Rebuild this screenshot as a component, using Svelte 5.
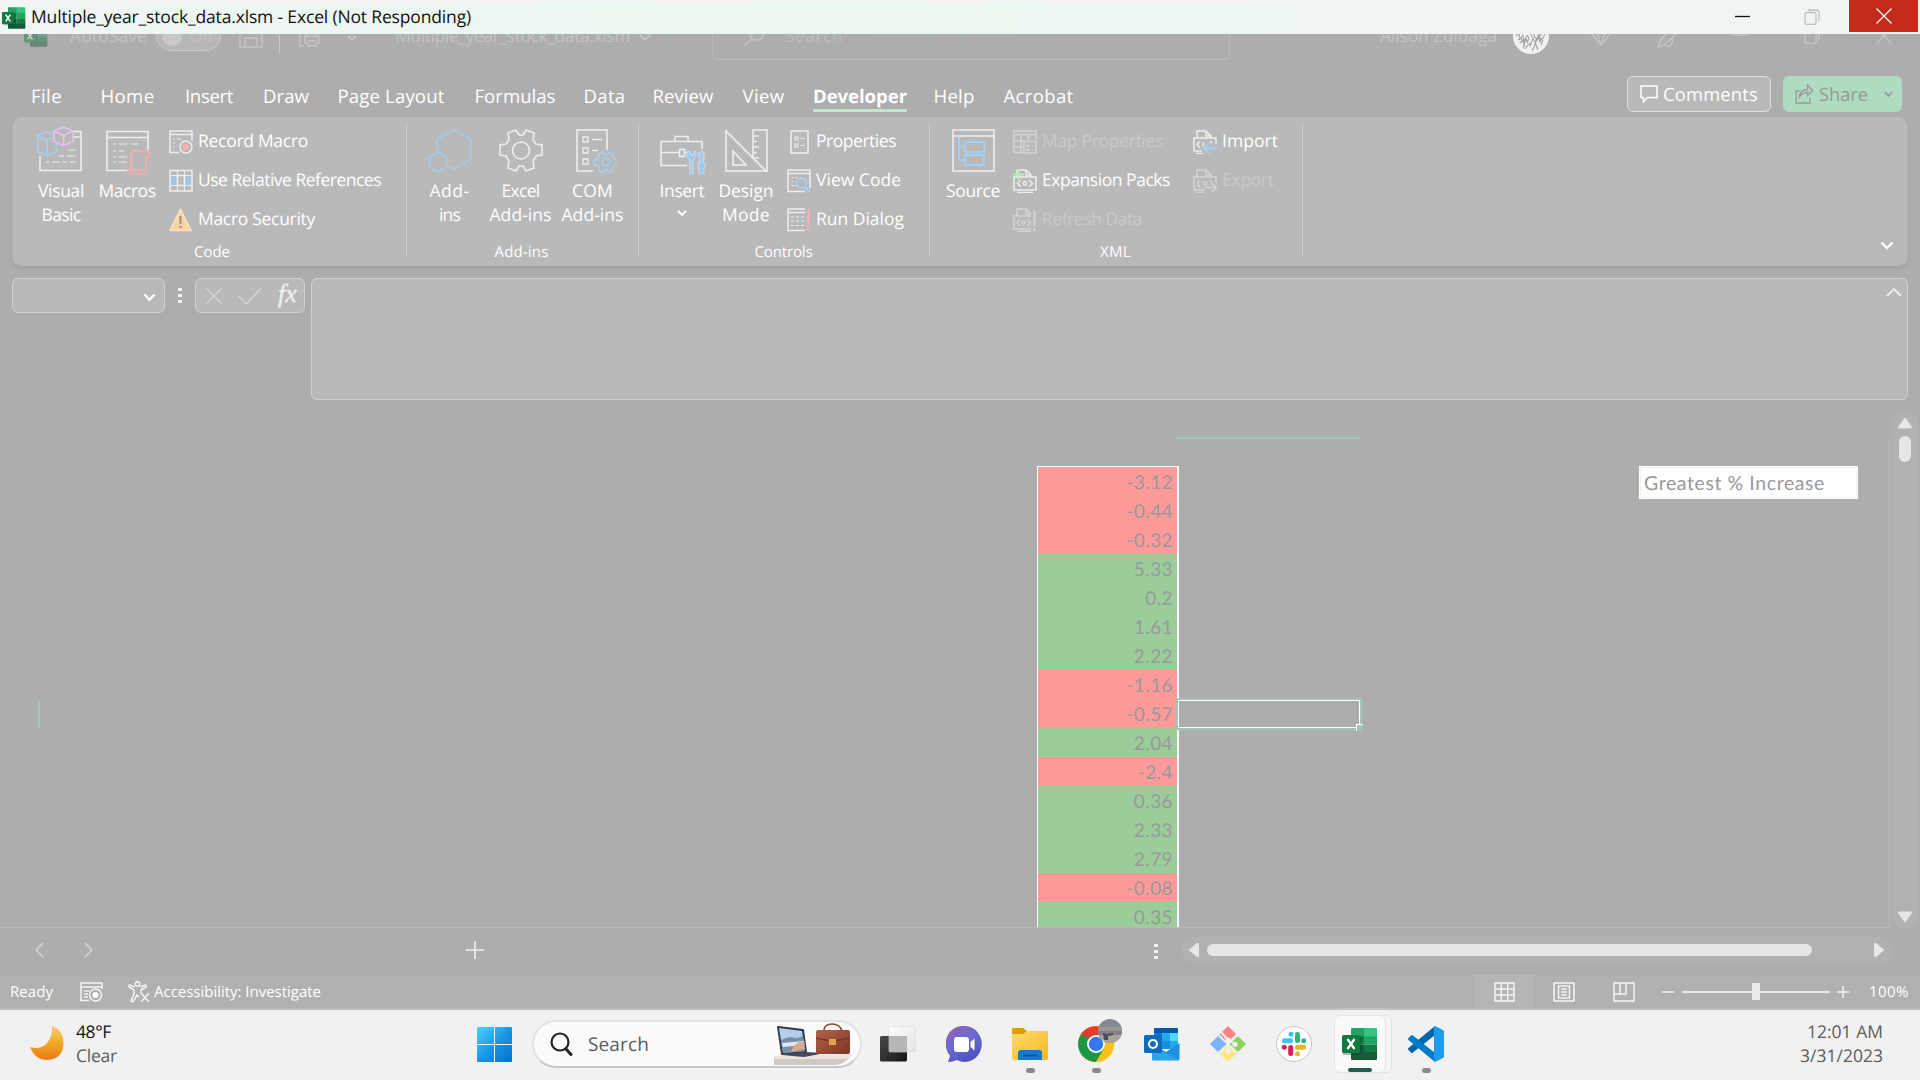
<script>
  // Spreads letter spacing so that a label takes exactly the given width.
  function fit(node, width) {
    if (!width) return;
    const natural = node.getBoundingClientRect().width;
    const count = node.textContent.length;
    node.style.letterSpacing = (width - natural) / count + 'px';
  }

  // name, label width, distance to the next tab
  const tabs = [
    ['File', 31, 69.5], ['Home', 54, 84.5], ['Insert', 48, 78], ['Draw', 46, 74.5], ['Page Layout', 107, 137],
    ['Formulas', 81, 109], ['Data', 42, 69], ['Review', 61, 90], ['View', 42, 70.5], ['Developer', 94, 120.5],
    ['Help', 41, 70], ['Acrobat', 70, 90]
  ];

  const groups = [
    {
      id: 'code', name: 'Code', nameWidth: 36,
      big: [
        { icon: 'visual', lines: [['Visual', 46], ['Basic', 39]] },
        { icon: 'macros', lines: [['Macros', 57]] }
      ],
      cols: [[['record', 'Record Macro', 110], ['relative', 'Use Relative References', 183], ['warning', 'Macro Security', 117]]]
    },
    {
      id: 'addins', name: 'Add-ins', nameWidth: 54,
      big: [
        { icon: 'hex', lines: [['Add-', 40], ['ins', 21]] },
        { icon: 'gear', lines: [['Excel', 38], ['Add-ins', 62]] },
        { icon: 'com', lines: [['COM', 41], ['Add-ins', 62]] }
      ],
      cols: []
    },
    {
      id: 'controls', name: 'Controls', nameWidth: 58,
      big: [
        { icon: 'toolbox', lines: [['Insert', 45]], menu: true },
        { icon: 'design', lines: [['Design', 55], ['Mode', 48]] }
      ],
      cols: [[['props', 'Properties', 80], ['viewcode', 'View Code', 85], ['dialog', 'Run Dialog', 88]]]
    },
    {
      id: 'xml', name: 'XML', nameWidth: 31,
      big: [{ icon: 'source', lines: [['Source', 54]] }],
      cols: [
        [['map', 'Map Properties', 121, true], ['expand', 'Expansion Packs', 128], ['refresh', 'Refresh Data', 100, true]],
        [['import', 'Import', 56], ['export', 'Export', 52, true]]
      ]
    }
  ];

  const changes = ['-3.12', '-0.44', '-0.32', '5.33', '0.2', '1.61', '2.22', '-1.16', '-0.57', '2.04', '-2.4', '0.36', '2.33', '2.79', '-0.08', '0.35'];
</script>

{#snippet excel(size)}
  <svg width={size} height={size} viewBox="0 0 36 36">
    <path d="M10 2h13v9H9V3q0-1 1-1z" fill="#21a366" /><path d="M22 2h12q1 0 1 1v8H22z" fill="#33c481" />
    <path d="M9 10.500h13v8H9z" fill="#107c41" /><path d="M22 10.500h13v8H22z" fill="#21a366" />
    <path d="M9 18.500h13v8H9z" fill="#185c37" /><path d="M22 18.500h13v8H22z" fill="#107c41" />
    <path d="M9 26h26v7q0 1-1 1H10q-1 0-1-1z" fill="#185c37" />
    <rect x="1" y="10" width="19" height="19" rx="1.500" fill="#0b3d24" opacity=".35" />
    <rect y="9" width="18" height="18" rx="1.500" fill="#107c41" />
    <path d="M5.500 13l7 10M12.500 13l-7 10" stroke="#fff" stroke-width="2.300" />
  </svg>
{/snippet}

{#snippet xmlDoc()}
  <path d="M4 8V1h9l5 5v2M13 1v5h5M1 8h22v13H1zM4 23.500h16" />
  <path d="M8 11l-3.500 3.500L8 18M16 11l3.500 3.500L16 18" /><circle cx="12" cy="14.500" r="1.700" />
{/snippet}

{#snippet smallIcon(kind)}
  <svg class="i24" viewBox="0 0 24 24">
    {#if kind === 'record'}
      <path d="M10 22.500H1V1h22v10M1 4.500h22" /><path d="M4 9h2M8 9h4M4 13h2M4 17h2M4 20h1" stroke-width="1.200" />
      <circle cx="17" cy="17" r="6" /><circle cx="17" cy="17" r="3.300" fill="#f7b0b0" stroke="none" />
    {:else if kind === 'relative'}
      <path d="M1.500 7.500h6v8h-6zM16.500 7.500h6v8h-6z" fill="#9dc6e8" stroke="none" />
      <path d="M1 1.500h22v20.500H1zM8.500 6.500h7v10h-7z" /><path d="M1 6.500h22M1 16.500h22M8.500 1.500v20.500M15.500 1.500v20.500" stroke-width="1.200" />
    {:else if kind === 'warning'}
      <path d="M11.500 1.500L22 22.500H1z" fill="#f6d3a0" stroke="#fae4c2" /><path d="M11.500 8v8M11.500 18v2" stroke="#8d8d85" stroke-width="1.800" />
    {:else if kind === 'props'}
      <path d="M4 1h17v22H4z" /><path d="M8 7h3v3H8zM8 14h3v3H8zM13.500 8.500h4M13.500 15.500h4" stroke-width="1.200" />
    {:else if kind === 'viewcode'}
      <path d="M18 22.500H1V1h22v18M1 4.500h22" /><path d="M4.500 8.500h2M8 8.500h2M4.500 12.500h2M4.500 16.500h2M8 16.500h2" stroke-width="1.200" />
      <circle cx="14.500" cy="14" r="5" stroke="#a6d0f1" stroke-width="1.800" /><path d="M18 18l5.500 5.500" stroke="#a6d0f1" stroke-width="2" />
    {:else if kind === 'dialog'}
      <path d="M18 1H1v21.500h17M1 4.500h17" /><path d="M4 9h3M9 9h3M14 9h3M4 13h3M9 13h3M14 13h3M4 17.500h3M9 17.500h3M14 17.500h3" stroke-width="1.200" />
      <path d="M21.500 1.500v17M21.500 20.500v2.500" stroke="#f5b2b4" stroke-width="2.400" />
    {:else if kind === 'map'}
      <path d="M10 22.500H1V1h22v9M1 4.500h22M1 11h10M1 17h9M8 5v17.500M15.500 5v5" /><path d="M11 11.500h12V23H11z" />
      <path d="M14 15h2v1.500h-2zM14 19h2v1.500h-2zM18.500 15.500h2M18.500 19.500h2" stroke-width="1.200" />
    {:else if kind === 'expand'}
      {@render xmlDoc()}<path d="M5.500 0v11M0 5.500h11" stroke="#b8ebc0" stroke-width="2" />
    {:else if kind === 'import'}
      <path d="M4 8V1h9l5 5v2M13 1v5h5M9 21H1V8h22v6M3 23.500h7M7 11l-3 3.500L7 18M17 11l2 2M11 12.500q-2 2 0 4" />
      <path d="M24 18.500H11M16.500 13l-6 5.500 6 5" stroke="#a6d0f1" stroke-width="1.800" />
    {:else if kind === 'export'}
      <path d="M4 8V1h9l5 5v2M13 1v5h5M12 21H1V8h22v6M3 23.500h8M7 11l-3 3.500L7 18M17 11l2 2" /><circle cx="12" cy="14.500" r="1.700" />
      <path d="M12 18.500h11M18.500 14l5 4.500-5 5" />
    {:else if kind === 'refresh'}
      <path d="M4 8V1h9l5 5M13 1v5h5M18 21H1V8h17M4 23.500h14M7 11l-3 3.500L7 18M14 11l3 3.500-3 3.500" /><circle cx="10.500" cy="14.500" r="1.700" />
      <path d="M21.500 3v15M21.500 20.500V23" stroke-width="2" />
    {/if}
  </svg>
{/snippet}

{#snippet bigIcon(kind)}
  <svg class="i48" viewBox="0 0 48 48">
    {#if kind === 'visual'}
      <path d="M36 5.500h8v39H3V30M36 11h8" /><path d="M31 24h8M22 30h5M30 30h9M9 36h3M15 36h8M26 36h4M33 36h6" stroke-width="1.200" />
      <path d="M10 6l9.500 4v15.500L10 30 .5 25.500V10zM.5 10l9.500 4 9.500-4M10 14v16" stroke="#a6d0f1" fill="#b9b9b9" />
      <path d="M26.500 1l9.500 4v10.500l-9.500 4-9.500-4V5zM17 5l9.500 4.500L36 5M26.500 9.500v10" stroke="#e8c2ee" fill="#b9b9b9" />
    {:else if kind === 'macros'}
      <path d="M24 44.500H4v-39h41V24M4 11.500h41" /><path d="M10 18h3M16 18h8M28 18h7M10 25h3M16 25h5M10 31h3M16 31h8M10 36h3M16 36h8" stroke-width="1.200" />
      <path d="M28 44V28q0-3 4-3h12q3 1 3 6h-4v13q0 4-3 4H28q-3-1-3-4h14" stroke="#f3adae" stroke-width="2" />
    {:else if kind === 'hex'}
      <path d="M11 25V13L28 4l17 10v19L28 43l-7-4" stroke="#a6cbea" /><path d="M12 26l8.500 5v10L12 46l-8.500-5V31z" stroke="#a6cbea" />
    {:else if kind === 'gear'}
      <path d="M19 4l3 5h4l3-5 8 3-1 7 3 4 6 1v10l-6 1-3 5 1 7-8 3-3-5h-4l-3 5-8-3 1-7-3-5-6-1V19l6-1 3-4-1-7z" /><circle cx="24" cy="24.500" r="8.500" />
    {:else if kind === 'com'}
      <g transform="translate(4 0)"><path d="M20 45H4V4h30v20" /><path d="M10 11h5v5h-5zM10 22h5v5h-5zM10 33h5v5h-5zM19 13.500h10M19 24.500h6" stroke-width="1.300" />
      <path d="M30 26l2 3h2l2-3 4 2v3l1.500 1.500 3-.5v7l-3 .5-1.500 2v3l-4 2-2-3h-2l-2 3-4-2v-3l-1.500-2-3-.5v-6l3 .5L26 31v-3z" stroke="#a6d0f1" /><circle cx="33" cy="36" r="3.800" stroke="#a6d0f1" /></g>
    {:else if kind === 'toolbox'}
      <path d="M29 39.500H3V15.500h41V23M3 26.500h18M27 26.500h3M17 15v-4.500h13V15M21.500 23.500h5v7h-5z" />
      <path d="M29 26v5l3 3v14h3V34l3-3v-5l-2-1v4h-4v-4zM41 26h5v6l-1 2v3h2v4l-1 1v6h-5v-6l-1-1v-4h2v-3l-1-2z" stroke="#c4e1f7" fill="#a0c8ea" stroke-width="1" />
    {:else if kind === 'design'}
      <path d="M4 5v40h40zM11 25v14h13z" /><path d="M31 31V4h14v41h-1M31 10h6M31 15.500h4M31 21h6M31 26.500h4M31 32h6" />
    {:else if kind === 'source'}
      <path d="M4 4h41v41H4zM4 10h41" /><path d="M10 11v23h6M10 20.500h6M16 16h19v10H16zM16 29h19v10H16z" stroke="#a6d0f1" stroke-width="2" />
    {/if}
  </svg>
{/snippet}

<div class="screen">
  <header class="title">
    <div class="logo">{@render excel(24)}</div>
    <span class="t17" use:fit={440}>Multiple_year_stock_data.xlsm - Excel (Not Responding)</span>
    <div class="wins">
      <svg width="16" height="16" viewBox="0 0 16 16"><path d="M0 7.500h15" stroke="#111" stroke-width="1.300" /></svg>
      <svg width="16" height="16" viewBox="0 0 16 16" fill="none" stroke="#bcc0bf" stroke-width="1.300"><rect x="1" y="3.500" width="11" height="12" rx="2" /><path d="M4 1h8q3 0 3 3v8" /></svg>
      <div class="close"><svg width="16" height="16" viewBox="0 0 16 16"><path d="M.5 .5l15 15M15.500 .5l-15 15" stroke="#fff" stroke-width="1.200" /></svg></div>
    </div>
  </header>

  <div class="apptitle">
    <div class="m-logo">{@render excel(24)}</div>
    <span class="m-auto" use:fit={77}>AutoSave</span>
    <div class="toggle"><i></i><span>Off</span></div>
    <svg class="m-save" width="24" height="24" viewBox="0 0 24 24"><path d="M1 1h19l3 3v19H1zM6 1v7h11V1M6 23v-9h12v9" /></svg>
    <div class="vline"></div>
    <svg class="m-print" width="22" height="24" viewBox="0 0 22 24"><path d="M5 22H1V2h12v5M8 12V8h9v4M6 12h14v7h-3v3H9v-3H6zM9 17h8" /></svg>
    <svg class="m-chev" width="10" height="6" viewBox="0 0 10 6"><path d="M1 1l4 4 4-4" stroke-width="1.800" /></svg>
    <span class="m-name" use:fit={235}>Multiple_year_stock_data.xlsm</span>
    <svg class="m-chev2" width="12" height="7" viewBox="0 0 12 7"><path d="M1 1l5 5 5-5" stroke-width="1.800" /></svg>
    <div class="searchbox">
      <svg width="21" height="22" viewBox="0 0 21 22"><circle cx="13" cy="8" r="7" /><path d="M8 13l-7.500 8" /></svg>
      <span use:fit={58}>Search</span>
    </div>
    <span class="m-user" use:fit={117}>Alison Zuluaga</span>
    <svg class="m-face" width="36" height="36" viewBox="0 0 36 36">
      <circle cx="18" cy="18" r="18" fill="#f0f0f0" stroke="none" />
      <path d="M3 18l3-2 1 5 3-4 1 6 3-5M7 25l3-3 1 5 2-6 2 4M17 15l3 5 2 4 3 8M20 14l2 5 2 3 5-7M22 26l3-8 2 6 2-4M12 31l3-4 2-1 3-5M25 15l3 7 2-2 2-4M5 22l3-2 2 4M19 33l2-4 1-3M14 17l2 3-2 5M28 27l2-5M17 29l1-4M10 30l2-3" stroke="#a2a2a2" stroke-width="1.100" />
    </svg>
    <svg class="m-gem" width="22" height="20" viewBox="0 0 22 20"><path d="M5 1h12l4 6-10 12L1 7zM1 7h20M7 7l4 12 4-12" /></svg>
    <svg class="m-pen" width="24" height="24" viewBox="0 0 24 24"><path d="M20 1L4 15l-3 8 6-2L23 6M12 15q5-1 3 4t-7 2" /></svg>
    <svg class="m-min" width="16" height="16" viewBox="0 0 16 16"><path d="M0 7h16" /></svg>
    <svg class="m-res" width="16" height="16" viewBox="0 0 16 16"><rect x="1" y="3.500" width="11" height="12" rx="1.500" /><path d="M4 1h8q3 0 3 3v8" /></svg>
    <svg class="m-x" width="16" height="16" viewBox="0 0 16 16"><path d="M.5 .5l15 15M15.500 .5l-15 15" /></svg>
  </div>

  <nav class="tabs">
    {#each tabs as [name, width, pitch]}
      <div class="tab" class:active={name === 'Developer'} style:width="{pitch}px"><span use:fit={width}>{name}</span></div>
    {/each}
    <div class="actions">
      <div class="comments">
        <svg width="18" height="18" viewBox="0 0 18 18" fill="none" stroke="#fff" stroke-width="1.500"><path d="M1 1h16v11.500H7.500L3.500 17v-4.500H1z" /></svg>
        <span use:fit={95}>Comments</span>
      </div>
      <div class="share">
        <svg width="18" height="20" viewBox="0 0 18 20" fill="none" stroke="#999" stroke-width="1.300"><path d="M4.500 7H1v12h14v-5M4.500 13q0-7 8-7.500V1l5 5.500-5 5V8.500q-5 0-8 4.500z" /></svg>
        <span use:fit={49}>Share</span>
        <svg width="9" height="6" viewBox="0 0 9 6" fill="none" stroke="#8d9a92" stroke-width="1.700"><path d="M.8 1l3.700 3.700L8.200 1" /></svg>
      </div>
    </div>
  </nav>

  <section class="ribbon">
    {#each groups as g}
      <div class="group {g.id}">
        <div class="tools">
          {#each g.big as b}
            <div class="big">
              {@render bigIcon(b.icon)}
              <div class="lines">
                {#each b.lines as [text, width]}<div><span use:fit={width}>{text}</span></div>{/each}
                {#if b.menu}<svg class="menu" width="10" height="7" viewBox="0 0 10 7"><path d="M1 1l4 4 4-4" /></svg>{/if}
              </div>
            </div>
          {/each}
          {#each g.cols as col}
            <div class="col">
              {#each col as [icon, text, width, off]}
                <div class="small" class:off>{@render smallIcon(icon)}<span use:fit={width}>{text}</span></div>
              {/each}
            </div>
          {/each}
        </div>
        <div class="gname"><span use:fit={g.nameWidth}>{g.name}</span></div>
      </div>
    {/each}
    <svg class="collapse" width="14" height="9" viewBox="0 0 14 9"><path d="M1.500 1.500L7 7l5.500-5.500" /></svg>
  </section>

  <section class="formula">
    <div class="namebox"><svg width="13" height="9" viewBox="0 0 13 9"><path d="M1.500 1.500l5 5.300 5-5.300" /></svg></div>
    <div class="dots"><i></i><i></i><i></i></div>
    <div class="fx">
      <svg width="18" height="18" viewBox="0 0 18 18"><path d="M.5 .5l17 17M17.500 .5l-17 17" /></svg>
      <svg width="24" height="18" viewBox="0 0 24 18"><path d="M.5 9l8 8L23.500 .5" /></svg>
      <em>fx</em>
    </div>
    <div class="field"><svg width="16" height="9" viewBox="0 0 16 9"><path d="M1 8l7-7 7 7" /></svg></div>
  </section>

  <main class="sheet">
    <div class="canvas">
      <div class="colmark"></div>
      <div class="rowmark"></div>
      <div class="change">
        {#each changes as value}
          <div class="cell" class:neg={value.startsWith('-')}>{value}</div>
        {/each}
      </div>
      <div class="selected"><i></i></div>
      <div class="greatest"><span use:fit={181}>Greatest % Increase</span></div>
      <div class="edge"></div>
    </div>
    <div class="vscroll">
      <svg width="14" height="11" viewBox="0 0 14 11"><path d="M7 0Q8 0 9 2l5 7q0 1.500-1 1.500H1Q0 10.500 0 9l5-7q1-2 2-2z" /></svg>
      <i></i>
      <svg class="down" width="14" height="11" viewBox="0 0 14 11"><path d="M7 11Q8 11 9 9l5-7q0-1.500-1-1.500H1Q0 .5 0 2l5 7q1 2 2 2z" /></svg>
    </div>
  </main>

  <section class="sheetbar">
    <svg class="prev" width="9" height="16" viewBox="0 0 9 16"><path d="M8 1L1 8l7 7" /></svg>
    <svg class="next" width="9" height="16" viewBox="0 0 9 16"><path d="M1 1l7 7-7 7" /></svg>
    <svg class="add" width="18" height="18" viewBox="0 0 18 18"><path d="M9 0v18M0 9h18" /></svg>
    <div class="dots"><i></i><i></i><i></i></div>
    <div class="hscroll">
      <svg width="10" height="14" viewBox="0 0 10 14"><path d="M0 7q0-1 2-2l6-5q2-.5 2 1v12q0 1.500-2 1L2 9Q0 8 0 7z" /></svg>
      <i></i>
      <svg class="right" width="10" height="14" viewBox="0 0 10 14"><path d="M10 7q0-1-2-2L2 0Q0-.5 0 1v12q0 1.500 2 1l6-5q2-1 2-2z" /></svg>
    </div>
  </section>

  <footer class="status">
    <span class="ready" use:fit={43}>Ready</span>
    <svg class="rec" width="23" height="20" viewBox="0 0 23 20"><path d="M9 18.500H1V1h21v6M1 5h21M4 9h5M4 12h4M4 15h4" /><circle cx="15.500" cy="13" r="6" /><circle cx="15.500" cy="13" r="3" fill="#fff" stroke="none" /></svg>
    <svg class="acc" width="22" height="22" viewBox="0 0 22 22"><circle cx="9.500" cy="3" r="2.300" /><path d="M6.500 6L2 4Q0 4 1 6l5 3v4l-3 7q1 2 2.500 0L9 14l2 2M12.500 6L17 4q2 0 1 2l-5 3v3M13 12l8 9M21 12l-8 9" /></svg>
    <span class="acct" use:fit={167}>Accessibility: Investigate</span>
    <div class="views">
      <div class="view on"><svg width="21" height="20" viewBox="0 0 21 20"><path d="M1 1h19v18H1zM1 7h19M1 13h19M7.300 1v18M13.700 1v18" /></svg></div>
      <div class="view"><svg width="22" height="20" viewBox="0 0 22 20"><path d="M1 1h20v18H1zM5.500 4h11v12h-11zM8 7h6M8 10h6M8 13h6" /></svg></div>
      <div class="view"><svg width="22" height="20" viewBox="0 0 22 20"><path d="M1 1h20v18H1zM1 12h12V1M7 1v11" /></svg></div>
    </div>
    <svg class="minus" width="12" height="12" viewBox="0 0 12 12"><path d="M0 6h12" /></svg>
    <div class="zoom"><i></i></div>
    <svg class="plus" width="12" height="12" viewBox="0 0 12 12"><path d="M0 6h12M6 0v12" /></svg>
    <span class="pct" use:fit={40}>100%</span>
  </footer>

  <footer class="taskbar">
    <div class="weather">
      <svg width="36" height="36" viewBox="0 0 36 36">
        <defs><linearGradient id="moon" x1="0" y1="0" x2="0" y2="1"><stop offset="0" stop-color="#f9cc6c" /><stop offset=".45" stop-color="#f0ae2e" /><stop offset="1" stop-color="#ee7714" /></linearGradient></defs>
        <path d="M22 0q11 4 11.500 16 0 17-16 18Q5 34 0 21q11 3 17-4 6-7 5-17z" fill="url(#moon)" />
      </svg>
      <div><div class="deg"><span use:fit={35}>48°F</span></div><div class="clear"><span use:fit={41}>Clear</span></div></div>
    </div>
    <svg class="start" width="35" height="35" viewBox="0 0 35 35">
      <defs><linearGradient id="win" x1="0" y1="0" x2="1" y2="1"><stop offset="0" stop-color="#4dd2ff" /><stop offset=".5" stop-color="#1c97e4" /><stop offset="1" stop-color="#0070cf" /></linearGradient></defs>
      <path d="M1 0h16v17H0V1q0-1 1-1zM18 0h16q1 0 1 1v16H18zM0 18h17v17H1q-1 0-1-1zM18 18h17v16q0 1-1 1H18z" fill="url(#win)" />
    </svg>
    <div class="pill">
      <svg width="23" height="24" viewBox="0 0 23 24" fill="none" stroke="#222" stroke-width="2.200"><circle cx="10" cy="10" r="8.500" /><path d="M16 17l5 5.500" stroke-width="3" stroke-linecap="round" /></svg>
      <span use:fit={61}>Search</span>
      <svg class="art" width="80" height="42" viewBox="0 0 80 42">
        <defs><linearGradient id="bag" x1="0" y1="0" x2="1" y2="1"><stop offset="0" stop-color="#b2634a" /><stop offset="1" stop-color="#7d3624" /></linearGradient></defs>
        <path d="M0 33h10l68-2q-2 4-5 6H0z" fill="#ebe4de" /><path d="M0 36h74q-5 5-12 6H0z" fill="#d3c8bf" />
        <path d="M4 3q-1 0-1 1l4 27q0 1 1 1l24-2q1 0 1-1L30 7q0-1-1-1z" fill="#333852" /><path d="M5 5l23 3 3 20-22 2z" fill="#b6cfea" /><path d="M7 17l8-3 8 1 6-2 2 15-22 2z" fill="#7590a8" /><path d="M8 20l22-2 .6 4-22 2z" fill="#dfe6ee" /><path d="M19 24q5-6 11-5l1 7-14 3z" fill="#d9a98d" />
        <path d="M7 32l24-3 21 1-22 4z" fill="#454860" />
        <path d="M50 8q0-7 8-7t10 7" fill="none" stroke="#8b4a34" stroke-width="1.600" />
        <rect x="42" y="7" width="34" height="24" rx="2" fill="url(#bag)" /><path d="M42 15q17 5 34 0" fill="none" stroke="#6e2f20" stroke-width="1.200" /><rect x="55" y="16" width="7" height="6" fill="#e0a94e" />
      </svg>
    </div>
    <div class="apps">
      <div class="app">
        <svg width="36" height="36" viewBox="0 0 36 36"><defs><linearGradient id="tv" x1="0" y1="0" x2="1" y2="1"><stop offset="0" stop-color="#4a4a4a" /><stop offset="1" stop-color="#161616" /></linearGradient><linearGradient id="tw" x1="0" y1="0" x2="1" y2="1"><stop offset="0" stop-color="#fff" /><stop offset="1" stop-color="#e2e2e2" /></linearGradient></defs><rect y="10" width="27" height="25.500" rx="1.500" fill="url(#tv)" /><rect x="9" y=".5" width="26.500" height="25.500" rx="1.500" fill="url(#tw)" stroke="#dcdcdc" stroke-width=".6" /><path d="M9 10h18v16H10.500Q9 26 9 24.500z" fill="#b6b6b6" /></svg>
      </div>
      <div class="app">
        <svg width="36" height="36" viewBox="0 0 36 36"><defs><linearGradient id="chat" x1="0" y1="0" x2=".6" y2="1"><stop offset="0" stop-color="#9a5fb0" /><stop offset=".5" stop-color="#6b6bd0" /><stop offset="1" stop-color="#5052c4" /></linearGradient></defs><path d="M18 0a17 18 0 1 1-7 34q-4 2-9 2l2-6A17 18 0 0 1 18 0z" fill="url(#chat)" /><rect x="8" y="11" width="15" height="15" rx="3" fill="#fff" /><path d="M24.500 16l4-3.500v12l-4-3.500z" fill="#fff" /></svg>
      </div>
      <div class="app">
        <svg width="36" height="36" viewBox="0 0 36 36"><defs><linearGradient id="fold" x1="0" y1="0" x2="1" y2="1"><stop offset="0" stop-color="#ffdb70" /><stop offset="1" stop-color="#f9b81c" /></linearGradient></defs><path d="M0 3q0-1 1-1h10l4 3h19q2 0 2 2v8H0z" fill="#dd9d0a" /><path d="M0 8h11l4-3h21v27q0 2-2 2H2q-2 0-2-2z" fill="url(#fold)" /><path d="M6 34V27q0-3 3-3h18q3 0 3 3v7z" fill="#117bcb" /><path d="M11 29.500h14" stroke="#06549b" stroke-width="1.600" /></svg>
        <i class="dot"></i>
      </div>
      <div class="app">
        <svg width="36" height="36" viewBox="0 0 36 36"><circle cx="18" cy="18" r="18" fill="#fbbc0c" /><path d="M18 18L2.500 9A18 18 0 0 1 33.500 9H18z" fill="#e53a2e" /><path d="M2.500 9A18 18 0 0 0 18 36l8-13-8-5z" fill="#1f9546" /><path d="M10 22.500L2.500 9 12 12z" fill="#1f9546" /><path d="M18 36l8-13.500L25 12l8.500-3A18 18 0 0 1 18 36z" fill="#fbc116" /><circle cx="18" cy="18" r="9" fill="#fff" /><circle cx="18" cy="18" r="7.200" fill="#3478ef" /></svg>
        <svg class="face" width="24" height="24" viewBox="0 0 24 24"><defs><clipPath id="round"><circle cx="12" cy="12" r="12" /></clipPath></defs><g clip-path="url(#round)"><path d="M0 0h24v24H0z" fill="#85888e" /><path d="M0 8h24v4H0z" fill="#9b958f" /><path d="M0 12h24v4H0z" fill="#80828a" /><path d="M0 16h24v8H0z" fill="#aca195" /><path d="M5 14l4 1 6-1v2l-5 1v4H6z" fill="#4b4e58" /></g></svg>
        <i class="dot"></i>
      </div>
      <div class="app">
        <svg width="36" height="36" viewBox="0 0 36 36"><path d="M11 2h22q1 0 1 1v18H10V3q0-1 1-1z" fill="#0358a7" /><path d="M10 7h8v8h-8z" fill="#0f78d4" /><path d="M18 7h8v8h-8z" fill="#28a8ea" /><path d="M26 7h8v8h-8z" fill="#50d9ff" /><path d="M10 15h16v8H10z" fill="#1490df" /><path d="M26 15h8v8h-8z" fill="#28a8ea" /><path d="M8 18l14 8 13.500-9v16q0 1.500-1.500 1.500H9.500Q8 34.500 8 33z" fill="#1c8fdd" /><path d="M8 19l27 15H9.500Q8 34 8 33z" fill="#2aa7e8" /><rect y="9" width="18" height="18" rx="1.500" fill="#0f6cbd" /><circle cx="9" cy="18" r="4" fill="none" stroke="#fff" stroke-width="2.200" /></svg>
      </div>
      <div class="app">
        <svg width="36" height="36" viewBox="0 0 36 36"><path d="M18 0l8 8-8.500 8.500-8-8z" fill="#ff8080" /><path d="M28 10l8 8-8 8-8.500-8z" fill="#8dd35f" /><path d="M8 10l8.500 8L8 26l-8-8z" fill="#80b3ff" /><path d="M18 19.500l8.500 8.500L18 36l-8-8z" fill="#ffe680" /><path d="M11 6l7 8v11M18 14l7 4" fill="none" stroke="#f1f1f1" stroke-width="2" /><circle cx="18" cy="14" r="2.500" fill="#f1f1f1" /><circle cx="25" cy="18.500" r="2.500" fill="#f1f1f1" /><circle cx="18" cy="25.500" r="2.500" fill="#f1f1f1" /></svg>
      </div>
      <div class="app">
        <svg width="36" height="36" viewBox="0 0 36 36"><circle cx="18" cy="18" r="17.500" fill="#fff" stroke="#c4c4c4" /><g stroke-width="5" stroke-linecap="round"><path d="M8.500 14.700h6" stroke="#36c5f0" /><path d="M15 8.300h.01" stroke="#36c5f0" /><path d="M21.500 8.500v6" stroke="#2eb67d" /><path d="M27.700 14.700h.01" stroke="#2eb67d" /><path d="M21.500 21.300h6" stroke="#ecb22e" /><path d="M21.500 27.700h.01" stroke="#ecb22e" /><path d="M14.700 21.500v6" stroke="#e01e5a" /><path d="M8.300 21.300h.01" stroke="#e01e5a" /></g></svg>
      </div>
      <div class="app current">{@render excel(36)}<i class="dot wide"></i></div>
      <div class="app">
        <svg width="36" height="36" viewBox="0 0 36 36"><path d="M27 0v9L5 26.500q-1 1-2 0L.5 24q-1-1 0-2z" fill="#0065a9" /><path d="M27 36v-9L5 9.500q-1-1-2 0L.5 12q-1 1 0 2z" fill="#007acc" /><path d="M26 0q1 0 1.500.3L35 4q1 .5 1 1.500v25q0 1-1 1.500l-7.500 3.700Q27 36 26 36z" fill="#1f9cf0" /></svg>
        <i class="dot"></i>
      </div>
    </div>
    <div class="clock"><div><span use:fit={76}>12:01 AM</span></div><div><span use:fit={83}>3/31/2023</span></div></div>
  </footer>
</div>

<style>
  :global(body) { margin: 0; overflow: hidden; background: #adadad; }
  .screen { width: 1920px; height: 1080px; overflow: hidden; display: flex; flex-direction: column; background: #adadad; color: #fff; font-family: 'Open Sans', 'Noto Sans', sans-serif; font-size: 17.500px; text-rendering: geometricPrecision; }
  .screen * { box-sizing: border-box; }
  svg { display: block; flex: none; }
  span { display: inline-block; white-space: nowrap; flex: none; }

  .title { height: 34px; flex: none; display: flex; align-items: center; position: relative; z-index: 2; color: #111; background: linear-gradient(90deg, #eff6f4, #ebf6ee 45%, #eef5f3 70%); border-top: 2px solid #f1f2f1; }
  .title .logo { margin: 0 5px 1px 2px; }
  .t17 { font-size: 17.500px; margin-bottom: 3px; }
  .wins { margin-left: auto; display: flex; align-items: flex-start; height: 34px; margin-top: -2px; padding-right: 2px; }
  .wins > svg { margin: 9px 53px 0 0; }
  .wins > svg + svg { margin-right: 29px; }
  .close { width: 69px; height: 32px; background: #c42b1c; display: flex; align-items: center; justify-content: center; }

  .apptitle { height: 48px; flex: none; margin-top: -22px; display: flex; align-items: center; color: #c3c3c3; }
  .apptitle svg { fill: none; stroke: #c5c5c5; stroke-width: 1.4; }
  .m-logo { margin-left: 24px; opacity: .45; }
  .m-logo :global(svg) { stroke: none; }
  .m-auto { margin-left: 22px; }
  .toggle { width: 65px; height: 30px; margin-left: 9px; border: 1.500px solid #c9c9c9; border-radius: 15px; background: #b7b7b7; display: flex; align-items: center; gap: 8px; padding-left: 5px; font-size: 16px; }
  .toggle i { width: 20px; height: 20px; border-radius: 50%; background: #c9c9c9; }
  .m-save { margin-left: 18px; }
  .vline { width: 1px; height: 36px; background: #c9c9c9; margin-left: 16px; }
  .m-print { margin-left: 19px; }
  .m-chev { margin: 4px 0 0 26px; }
  .m-name { margin-left: 38px; }
  .m-chev2 { margin: 2px 0 0 9px; }
  .searchbox { margin-left: 61px; width: 518px; height: 48px; border: 1px solid #b7b7b7; border-bottom-color: #bcbcbc; border-radius: 6px; display: flex; align-items: center; padding-left: 31px; gap: 20px; color: #bdbdbd; }
  .m-user { margin-left: 150px; }
  .m-face { margin-left: 16px; }
  .m-gem { margin-left: 41px; }
  .m-pen { margin-left: 45px; }
  .m-min { margin-left: 51px; }
  .m-res { margin-left: 56px; }
  .m-x { margin-left: 56px; }

  .tabs { height: 57px; flex: none; display: flex; align-items: flex-start; padding: 24px 18px 0 31px; font-size: 18.600px; }
  .tab { height: 28px; line-height: 25px; flex: none; }
  .tab.active { font-weight: 700; }
  .tab.active span { height: 28px; border-bottom: 3px solid #bfe5cf; }
  .actions { margin: -8px 0 0 auto; display: flex; gap: 12px; font-size: 18.300px; }
  .actions span { padding-top: 1px; }
  .comments, .share { height: 36px; display: flex; align-items: center; border-radius: 6px; }
  .comments { width: 144px; border: 1px solid #dedede; background: #b9b9b9; padding-left: 12px; gap: 5px; }
  .share { width: 119px; background: #afdbc0; color: #999; padding-left: 12px; gap: 6px; }
  .share svg:last-child { margin-left: 10px; }

  .ribbon { height: 149px; flex: none; margin: 0 12px; border-radius: 10px; background: #b9b9b9; display: flex; box-shadow: 0 2px 4px #9f9f9f; padding: 7px 0 9px; }
  .group { border-right: 1px solid #d0d0d0; height: 133px; display: flex; flex-direction: column; flex: none; }
  .code { width: 395px; padding-left: 16px; }
  .addins { width: 232px; padding-left: 7px; }
  .controls { width: 291px; padding-left: 11px; }
  .xml { width: 373px; padding-left: 11px; }
  .tools { display: flex; height: 118px; flex: none; }
  .big { width: 66px; display: flex; flex-direction: column; align-items: center; padding-top: 2px; flex: none; }
  .addins .big { width: 71px; }
  .addins .big:last-child { width: 73px; }
  .controls .big, .xml .big { width: 64px; }
  .lines { line-height: 24px; text-align: center; margin-top: 5px; }
  .menu { margin: 7px auto 0; fill: none; stroke: #fff; stroke-width: 1.800; }
  .i48 { width: 48px; height: 48px; fill: none; stroke: #eee; stroke-width: 1.600; }
  .i24 { width: 24px; height: 24px; fill: none; stroke: #eee; stroke-width: 1.500; }
  .col { margin-left: 9px; margin-top: -2px; flex: none; }
  .controls .col { margin-left: 9px; }
  .xml .col { margin-left: 8px; width: 172px; }
  .small { height: 39px; display: flex; align-items: center; gap: 5px; }
  .small span { padding-bottom: 1px; }
  .off { color: #c9c9c9; }
  .off .i24 { stroke: #d4d4d4; }
  .gname { font-size: 15px; line-height: 20px; text-align: center; }
  .code .gname { padding-right: 10px; }
  .addins .gname { padding-right: 9px; }
  .controls .gname, .xml .gname { padding-right: 12px; }
  .collapse { margin: 117px 14px 0 auto; fill: none; stroke: #fff; stroke-width: 2.400; }

  .formula { height: 134px; flex: none; display: flex; align-items: flex-start; padding: 12px 12px 0; }
  .formula svg { fill: none; stroke: #d4d4d4; stroke-width: 1.300; }
  .namebox, .fx, .field { border: 1px solid #d0d0d0; border-radius: 6px; background: #b9b9b9; height: 35px; }
  .namebox { width: 153px; display: flex; align-items: center; justify-content: flex-end; padding: 4px 8px 0 0; }
  .namebox svg { stroke: #fff; stroke-width: 2.400; }
  .dots { display: flex; flex-direction: column; gap: 3px; }
  .dots i { width: 4px; height: 3px; background: #eee; }
  .formula .dots { margin: 10px 13px 0 13px; }
  .fx { width: 110px; display: flex; align-items: center; padding-left: 9px; gap: 15px; }
  .fx em { font: italic 26px/30px 'Liberation Serif', serif; color: #eee; margin: -3px 0 0 1px; -webkit-text-stroke: .5px #eee; }
  .field { width: 1597px; height: 122px; margin-left: 6px; display: flex; justify-content: flex-end; padding: 9px 5px; }
  .field svg { stroke: #eee; stroke-width: 1.800; }

  .sheet { height: 527px; flex: none; display: flex; }
  .canvas { width: 1890px; height: 528px; position: relative; border-bottom: 1px solid #b8b8b8; overflow: hidden; }
  .edge { position: absolute; right: 0; top: 38px; bottom: 0; width: 1px; background: #b8b8b8; }
  .colmark { position: absolute; left: 1176px; top: 37px; width: 185px; height: 2px; background: #a2c6b4; }
  .rowmark { position: absolute; left: 38px; top: 300px; width: 2px; height: 29px; background: #a2c6b4; }
  .change { position: absolute; left: 1037px; top: 66px; width: 142px; height: 461px; overflow: hidden; border: solid #fff; border-width: 1px 2px 0 1px; }
  .cell { height: 29px; line-height: 32px; padding-right: 4px; text-align: right; background: #9acd9a; color: #999; font-family: Lato, 'Open Sans', sans-serif; font-size: 19px; letter-spacing: .4px; }
  .cell.neg { background: #ff9a9a; }
  .selected { position: absolute; left: 1176px; top: 298px; width: 186px; height: 32px; border: 2px solid #a2c6b4; box-shadow: inset 0 0 0 1px #fff; }
  .selected i { position: absolute; right: -3px; bottom: -3px; width: 7px; height: 7px; background: #a2c6b4; border: solid #fff; border-width: 1px 0 0 1px; }
  .greatest { position: absolute; left: 1639px; top: 66px; width: 219px; height: 33px; background: #fff; box-shadow: inset 0 0 0 1px #fff, inset 0 0 0 2px #f1f1f1; color: #999; font: 19.500px/35px Lato, 'Open Sans', sans-serif; padding-left: 5px; }
  .vscroll { width: 26px; height: 519px; margin: 10px 0 0 2px; background: #b1b1b1; border-radius: 13px; display: flex; flex-direction: column; align-items: center; padding: 8px 0 7px; }
  .vscroll svg, .hscroll svg { fill: #e6e6e6; }
  .vscroll i { width: 12px; height: 26px; border-radius: 6px; background: #e6e6e6; margin-top: 7px; }
  .down { margin-top: auto; }

  .sheetbar { height: 48px; flex: none; display: flex; align-items: center; }
  .prev, .next, .add { fill: none; stroke: #d8d8d8; stroke-width: 1.500; }
  .prev { margin: -3px 0 0 35px; }
  .next { margin: -3px 0 0 40px; }
  .add { margin: -3px 0 0 373px; stroke: #eee; stroke-width: 1.600; }
  .sheetbar .dots { margin-left: 670px; }
  .hscroll { margin: -2px 0 0 23px; width: 711px; height: 26px; border-radius: 13px; background: #b1b1b1; display: flex; align-items: center; padding: 0 8px; }
  .hscroll i { width: 605px; height: 12px; border-radius: 6px; background: #e6e6e6; margin-left: 8px; }
  .right { margin-left: auto; }

  .status { height: 35px; flex: none; background: #b0b0b0; border-bottom: 2px solid #bfbfbf; display: flex; align-items: center; font-size: 15px; }
  .status span { padding-top: 1px; }
  .status svg { fill: none; stroke: #f4f4f4; stroke-width: 1.500; }
  .ready { margin-left: 10px; }
  .rec { margin-left: 27px; }
  .acc { margin-left: 25px; }
  .acct { margin-left: 4px; }
  .views { margin-left: 1153px; display: flex; height: 33px; }
  .view { width: 60px; display: flex; align-items: center; justify-content: center; }
  .on { background: #b5b5b5; }
  .minus { margin-left: 8px; }
  .zoom { width: 148px; height: 2px; margin-left: 8px; background: #eaeaea; display: flex; justify-content: center; align-items: center; }
  .zoom i { width: 8px; height: 17px; background: #eaeaea; flex: none; }
  .plus { margin-left: 7px; }
  .pct { margin-left: 20px; }

  .taskbar { height: 70px; flex: none; background: #f1f1f1; color: #5c5c5c; display: flex; }
  .weather { width: 477px; padding: 16px 0 0 30px; display: flex; gap: 10px; line-height: 24px; }
  .weather > div { margin-top: -6px; }
  .deg { color: #111; }
  .start { margin-top: 17px; }
  .pill { width: 330px; height: 48px; margin: 10px 0 0 20px; border: 2px solid #e2e2e2; border-bottom-color: #c8c8c8; border-radius: 24px; background: #fbfbfb; display: flex; align-items: center; font-size: 19px; padding-left: 16px; }
  .pill span { margin-left: 15px; }
  .art { margin: 0 0 0 125px; }
  .apps { display: flex; margin-left: 3px; }
  .app { width: 66px; height: 70px; display: flex; flex-direction: column; align-items: center; padding-top: 16px; position: relative; flex: none; }
  .app .dot { width: 9px; height: 5px; border-radius: 3px; background: #8a8a8a; margin-top: 6px; }
  .app .wide { width: 24px; background: #235d52; }
  .face { position: absolute; left: 35px; top: 9px; }
  .current { background: #fafafa; width: 52px; height: 58px; margin: 5px 7px 0; padding-top: 10px; border: 1px solid #e4e4e4; border-radius: 6px; box-shadow: 6px 0 0 -1px #f5f5f5, 6px 0 0 0 #e3e3e3; }
  .clock { margin-left: auto; padding: 10px 37px 0 0; text-align: right; line-height: 24px; }
</style>
